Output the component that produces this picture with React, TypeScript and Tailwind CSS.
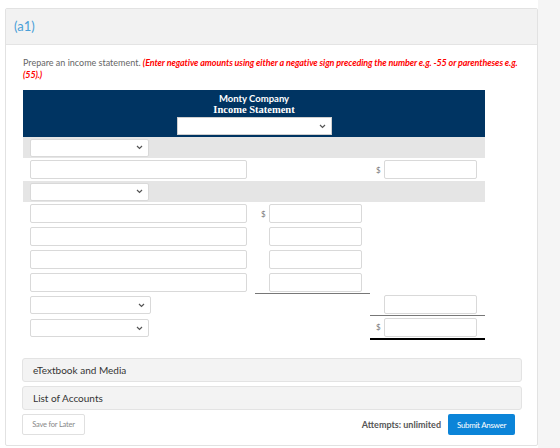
import React from "react";

const Chevron = () => (
  <svg width="7" height="5" viewBox="0 0 7 5" className="shrink-0">
    <polyline points="1,1 3.5,3.5 6,1" fill="none" stroke="#555" strokeWidth="1.2" />
  </svg>
);

const Select = ({ w }: { w: string }) => (
  <div className={`${w} h-[18px] bg-white border border-[#d9d9d9] rounded-[2px] flex items-center justify-end pr-[5px]`}>
    <Chevron />
  </div>
);

const Input = ({ w }: { w: string }) => (
  <div className={`${w} h-[19px] bg-white border border-[#d9d9d9] rounded-[2px]`} />
);

const Dollar = () => <span className="w-[8px] text-[8px] text-[#777] leading-none">$</span>;

export default function App() {
  return (
    <div className="w-[560px] h-[448px] bg-white flex" style={{ fontFamily: "Lato, 'Open Sans', sans-serif" }}>
      <div className="w-[538px] pl-[5px] pt-[8px]">
        <div className="w-[533px] h-[438px] border border-[#e2e2e2] rounded-[2px] flex flex-col">
          <div className="h-[36px] bg-[#f2f2f2] border-b border-[#e4e4e4] flex items-center pl-[8px]">
            <span className="text-[13px] text-[#4a9fd8]">(a1)</span>
          </div>
          <div className="pl-[17px] pr-[15px] pt-[12px] flex flex-col">
            <p className="text-[9px] leading-[11.5px] text-[#666]">
              Prepare an income statement.{" "}
              <span className="text-[#f00] font-bold italic tracking-[-0.1px]">
                (Enter negative amounts using either a negative sign preceding the number e.g. -55 or parentheses e.g. (55).)
              </span>
            </p>
            <div className="mt-[10px] w-[462px] flex flex-col">
              <div className="h-[47px] bg-[#003462] flex flex-col items-center pt-[3px]">
                <div className="text-[9.5px] font-bold text-white leading-[11px]">Monty Company</div>
                <div className="text-[10.5px] font-bold text-white leading-[12px]" style={{ fontFamily: "'Liberation Serif', serif" }}>
                  Income Statement
                </div>
                <div className="mt-[1px] w-[155px] h-[18px] bg-white border border-[#cfcfcf] flex items-center justify-end pr-[5px]">
                  <Chevron />
                </div>
              </div>
              <div className="h-[21px] bg-[#e5e5e5] flex items-center pl-[7px]">
                <Select w="w-[119px]" />
              </div>
              <div className="h-[23px] flex items-center">
                <div className="w-[232px] pl-[7px]"><Input w="w-[217px]" /></div>
                <div className="w-[115px]" />
                <div className="w-[115px] flex items-center pl-[6px]"><Dollar /><Input w="w-[93px]" /></div>
              </div>
              <div className="h-[21px] bg-[#e5e5e5] flex items-center pl-[7px]">
                <Select w="w-[119px]" />
              </div>
              {[0, 1, 2, 3].map((i) => (
                <div key={i} className="h-[23px] flex items-center">
                  <div className="w-[232px] pl-[7px]"><Input w="w-[217px]" /></div>
                  <div className={`w-[115px] h-full flex items-center pl-[6px] ${i === 3 ? "border-b border-[#777]" : ""}`}>
                    {i === 0 ? <Dollar /> : <span className="w-[8px]" />}
                    <Input w="w-[93px]" />
                  </div>
                </div>
              ))}
              <div className="h-[22px] flex items-center">
                <div className="w-[232px] pl-[7px]"><Select w="w-[121px]" /></div>
                <div className="w-[115px]" />
                <div className="w-[115px] h-full flex items-center pl-[6px] border-b border-[#777]">
                  <span className="w-[8px]" />
                  <Input w="w-[93px]" />
                </div>
              </div>
              <div className="h-[24px] flex items-center">
                <div className="w-[232px] pl-[7px]"><Select w="w-[119px]" /></div>
                <div className="w-[115px]" />
                <div className="w-[115px] h-full flex items-center pl-[6px] border-b-2 border-black">
                  <Dollar />
                  <Input w="w-[93px]" />
                </div>
              </div>
            </div>
            <div className="mt-[18px] -ml-[1px] w-[500px] h-[24px] bg-[#f3f3f3] border border-[#e3e3e3] rounded-[3px] flex items-center pl-[10px]">
              <span className="text-[10px] text-[#333]">eTextbook and Media</span>
            </div>
            <div className="mt-[4px] -ml-[1px] w-[500px] h-[24px] bg-[#f3f3f3] border border-[#e3e3e3] rounded-[3px] flex items-center pl-[10px]">
              <span className="text-[10px] text-[#333]">List of Accounts</span>
            </div>
            <div className="mt-[4px] -ml-[1px] w-[493px] flex items-center">
              <div className="w-[63px] h-[21px] bg-white border border-[#e0e0e0] rounded-[2px] flex items-center justify-center">
                <span className="text-[7.5px] text-[#888] tracking-[-0.2px]">Save for Later</span>
              </div>
              <div className="flex-1" />
              <span className="text-[9px] font-bold text-[#555] mr-[7px]">Attempts: unlimited</span>
              <div className="w-[67px] h-[21px] bg-[#0b84d8] rounded-[2px] flex items-center justify-center">
                <span className="text-[8px] text-white tracking-[-0.3px]">Submit Answer</span>
              </div>
            </div>
          </div>
        </div>
      </div>
      <div className="flex-1 bg-[#f5f5f5]" />
    </div>
  );
}
